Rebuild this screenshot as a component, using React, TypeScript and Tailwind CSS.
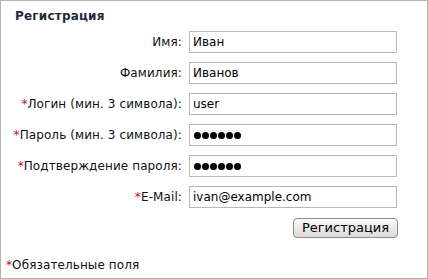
import React from "react";

const rows: { label: string; req: boolean; value: string; pwd?: boolean }[] = [
  { label: "Имя:", req: false, value: "Иван" },
  { label: "Фамилия:", req: false, value: "Иванов" },
  { label: "Логин (мин. 3 символа):", req: true, value: "user" },
  { label: "Пароль (мин. 3 символа):", req: true, value: "", pwd: true },
  { label: "Подтверждение пароля:", req: true, value: "", pwd: true },
  { label: "E-Mail:", req: true, value: "ivan@example.com" },
];

export default function App() {
  return (
    <div
      className="w-[428px] h-[279px] border border-[#b4b4b4] bg-white flex flex-col text-black"
      style={{ fontFamily: '"DejaVu Sans", Verdana, sans-serif' }}
    >
      <h1 className="text-[12px] font-bold text-[#1f2b3a] pl-[14px] pt-[8px] h-[30px] leading-[14px] tracking-[0.2px]">
        Регистрация
      </h1>
      <div className="flex flex-col gap-[9px]">
        {rows.map((r) => (
          <div key={r.label} className="flex items-center h-[22px]">
            <label className="w-[188px] pr-[7px] text-right text-[12px] leading-[14px] whitespace-nowrap text-[#111] tracking-[0.1px]">
              {r.req && <span className="text-[#c0102a]">*</span>}
              {r.label}
            </label>
            <div className="w-[208px] h-[22px] border border-[#b8b8b8] px-[3px] flex items-center text-[12px] leading-[14px]">
              {r.pwd ? (
                <span className="flex gap-[1px] pl-[1px]">
                  {[0, 1, 2, 3, 4, 5].map((i) => (
                    <span key={i} className="block w-[7px] h-[7px] rounded-full bg-black" />
                  ))}
                </span>
              ) : (
                r.value
              )}
            </div>
          </div>
        ))}
      </div>
      <div className="flex justify-end pr-[29px] mt-[10px]">
        <button className="w-[105px] h-[20px] border border-[#8e8e8e] rounded-[4px] bg-gradient-to-b from-[#fbfbfb] to-[#dadada] text-[13px] leading-[14px] text-black">
          Регистрация
        </button>
      </div>
      <div className="mt-auto pb-[6px] pl-[5px] text-[12px] leading-[14px] text-[#111] tracking-[0.1px]">
        <span className="text-[#c0102a]">*</span>Обязательные поля
      </div>
    </div>
  );
}
